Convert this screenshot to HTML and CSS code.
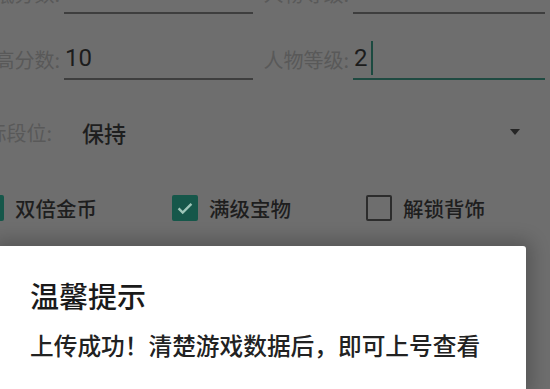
FILE: index.html
```html
<!DOCTYPE html>
<html lang="zh-CN">
<head>
<meta charset="utf-8">
<link rel="stylesheet" href="styles.css">
</head>
<body>
<div class="screen">
  <div class="form">
    <div class="row">
      <div class="label"><span>最低分数:</span></div>
      <div class="field"><span class="value">10</span></div>
      <div class="label"><span>人物等级:</span></div>
      <div class="field"><span class="value">11</span></div>
    </div>
    <div class="row">
      <div class="label"><span>最高分数:</span></div>
      <div class="field"><span class="value">10</span></div>
      <div class="label"><span>人物等级:</span></div>
      <div class="field focused"><span class="value">2</span><span class="cursor"></span></div>
    </div>
    <div class="select-row">
      <div class="label short"><span>目标段位:</span></div>
      <div class="select-value">保持</div>
      <div class="arrow"></div>
    </div>
    <div class="checks">
      <div class="check"><span class="box on"><svg viewBox="0 0 24 24"><path d="M5 12.5l4.5 4.5L19 7.5" fill="none" stroke="#9ec6b9" stroke-width="2.6"/></svg></span><span class="check-text">双倍金币</span></div>
      <div class="check"><span class="box on"><svg viewBox="0 0 24 24"><path d="M5 12.5l4.5 4.5L19 7.5" fill="none" stroke="#9ec6b9" stroke-width="2.6"/></svg></span><span class="check-text">满级宝物</span></div>
      <div class="check"><span class="box"></span><span class="check-text">解锁背饰</span></div>
    </div>
  </div>
  <div class="dialog">
    <div class="dialog-title">温馨提示</div>
    <div class="dialog-body">上传成功！清楚游戏数据后，即可上号查看</div>
  </div>
</div>
</body>
</html>
```

FILE: styles.css
```css
html, body {
  margin: 0;
  padding: 0;
}
body {
  width: 550px;
  height: 389px;
  overflow: hidden;
  background: #6e6e6e;
  font-family: "Noto Sans CJK SC", "Noto Sans", Roboto, sans-serif;
}
.screen {
  width: 550px;
  height: 389px;
  display: flex;
  flex-direction: column;
  overflow: hidden;
}
.form {
  margin-top: -28px;
  display: flex;
  flex-direction: column;
}
.row {
  display: grid;
  grid-template-columns: 64px 189px 100px 192px;
  align-items: center;
  margin-bottom: 24px;
}
.label {
  display: flex;
  justify-content: flex-end;
  padding-right: 4px;
  white-space: nowrap;
  font-size: 20px;
  color: #595959;
}
.field {
  height: 40px;
  border-bottom: 2px solid #3e3e3e;
  display: flex;
  align-items: center;
  font-family: Roboto, "Noto Sans", sans-serif;
  font-size: 24px;
  color: #1c1c1c;
}
.field.focused {
  border-bottom-color: #1f4a41;
}
.value {
  padding-left: 1px;
}
.cursor {
  width: 2px;
  height: 34px;
  margin-left: 3px;
  background: #1c4a40;
}
.select-row {
  display: flex;
  align-items: center;
  height: 40px;
  margin-top: 8px;
}
.label.short {
  width: 52px;
}
.select-value {
  margin-left: 26px;
  font-size: 22px;
  font-weight: 500;
  color: #1e1e1e;
}
.arrow {
  margin-left: auto;
  margin-right: 30px;
  width: 0;
  height: 0;
  border-left: 5px solid transparent;
  border-right: 5px solid transparent;
  border-top: 6px solid #262626;
}
.checks {
  display: grid;
  grid-template-columns: repeat(3, 194px);
  margin-left: -22px;
  margin-top: 41px;
  align-items: center;
}
.check {
  display: flex;
  align-items: center;
  gap: 11px;
}
.box {
  width: 22px;
  height: 22px;
  border: 2px solid #2c2c2c;
  border-radius: 2px;
  display: flex;
  align-items: center;
  justify-content: center;
}
.box.on {
  background: #16574a;
  border-color: #16574a;
}
.box svg {
  width: 22px;
  height: 22px;
}
.check-text {
  font-size: 20.5px;
  font-weight: 500;
  color: #1e1e1e;
}
.dialog {
  margin-top: auto;
  width: 526px;
  height: 143px;
  background: #ffffff;
  border-radius: 0 3px 0 0;
  box-shadow: 0 0 18px 6px rgba(0, 0, 0, 0.22);
  padding: 32px 0 0 30px;
  box-sizing: border-box;
}
.dialog-title {
  font-size: 29px;
  line-height: 35px;
  font-weight: 500;
  color: #1a1a1a;
}
.dialog-body {
  margin-top: 18px;
  font-size: 23.7px;
  line-height: 28px;
  font-weight: 500;
  color: #222222;
  white-space: nowrap;
}
```
